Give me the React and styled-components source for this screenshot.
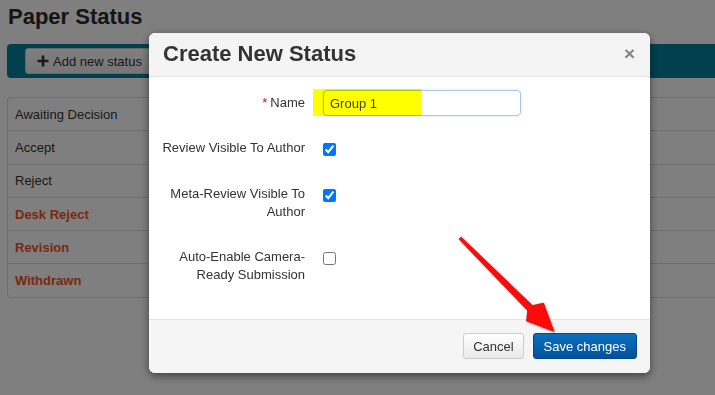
import React from 'react';
import styled, { createGlobalStyle } from 'styled-components';

const GlobalStyle = createGlobalStyle`
  html, body {
    margin: 0;
    padding: 0;
    background: #fff;
    overflow: hidden;
    font-family: "Liberation Sans", Arial, sans-serif;
    font-size: 13px;
    color: #333;
  }
`;

const Page = styled.div`
  width: 740px;
  padding: 5px 0 0 7px;
  box-sizing: border-box;
`;

const PageTitle = styled.h1`
  margin: 0 0 15px 1px;
  font-size: 22px;
  line-height: 24px;
  font-weight: bold;
  color: #2a2a2a;
`;

const ToolBar = styled.div`
  display: flex;
  align-items: center;
  height: 34px;
  padding-left: 18px;
  background: #04809f;
  border-radius: 4px 0 0 4px;
`;

const ToolButton = styled.button`
  display: flex;
  align-items: center;
  gap: 4px;
  height: 26px;
  padding: 0 12px 0 11px;
  font-family: inherit;
  font-size: 13px;
  color: #333;
  background: linear-gradient(#ffffff, #ededed);
  border: 1px solid #cfcfcf;
  border-radius: 3px;
`;

const StatusList = styled.div`
  margin-top: 19px;
  border: 1px solid #dcdcdc;
  border-right: 0;
  border-radius: 4px 0 0 4px;
`;

const StatusRow = styled.div`
  height: 32.3px;
  display: flex;
  align-items: center;
  padding-left: 7px;
  font-size: 13px;
  font-weight: ${p => (p.$custom ? 'bold' : 'normal')};
  color: ${p => (p.$custom ? '#f25024' : '#333')};
  border-top: ${p => (p.$first ? '0' : '1px solid #dcdcdc')};
`;

const Backdrop = styled.div`
  position: fixed;
  inset: 0;
  background: rgba(0, 0, 0, 0.5);
`;

const Modal = styled.div`
  position: fixed;
  left: 149px;
  top: 33px;
  width: 501px;
  background: #fff;
  border-radius: 6px;
  box-shadow: 0 3px 9px rgba(0, 0, 0, 0.5);
  overflow: hidden;
`;

const ModalHeader = styled.div`
  display: flex;
  align-items: center;
  justify-content: space-between;
  padding: 9px 14px 10px 14px;
  background: #f4f4f4;
  border-bottom: 1px solid #e6e6e6;
`;

const ModalTitle = styled.h3`
  margin: 0;
  font-size: 22px;
  line-height: 24px;
  font-weight: bold;
  color: #333;
`;

const CloseButton = styled.span`
  font-size: 19px;
  line-height: 20px;
  font-weight: bold;
  color: #858585;
  margin-right: 1px;
`;

const ModalBody = styled.div`
  padding: 13px 10px 35px 10px;
`;

const FormRow = styled.div`
  display: grid;
  grid-template-columns: 146px 198px;
  column-gap: 18px;
  align-items: ${p => (p.$center ? 'center' : 'start')};
  margin-top: ${p => p.$gap || 0}px;
`;

const FieldLabel = styled.label`
  text-align: right;
  font-size: 13px;
  line-height: 18px;
  color: #333;
`;

const Required = styled.span`
  color: #c8102e;
  margin-right: 3px;
`;

const TextInput = styled.input`
  width: 198px;
  height: 26px;
  box-sizing: border-box;
  padding: 0 6px;
  font-family: inherit;
  font-size: 13px;
  color: #444;
  border: 1px solid #a9c9e8;
  border-radius: 4px;
  box-shadow: 0 0 3px rgba(102, 175, 233, 0.35);
  outline: none;
`;

const Check = styled.input`
  width: 13px;
  height: 13px;
  margin: 4px 0 0 0;
`;

const ModalFooter = styled.div`
  display: flex;
  justify-content: flex-end;
  gap: 9px;
  padding: 13px 13px 14px;
  background: #f5f5f5;
  border-top: 1px solid #e3e3e3;
`;

const FooterButton = styled.button`
  height: 26px;
  padding: 0 ${p => (p.$primary ? 10 : 9)}px;
  font-family: inherit;
  font-size: 13px;
  border-radius: 3px;
  color: ${p => (p.$primary ? '#fff' : '#333')};
  background: ${p =>
    p.$primary ? 'linear-gradient(#0a70bf, #03509a)' : 'linear-gradient(#ffffff, #e9e9e9)'};
  border: 1px solid ${p => (p.$primary ? '#03488c' : '#cdcdcd')};
`;

const Highlight = styled.div`
  position: absolute;
  left: 164px;
  top: 56px;
  width: 108px;
  height: 27px;
  background: #ffff00;
  mix-blend-mode: multiply;
  pointer-events: none;
`;

const ArrowLayer = styled.svg`
  position: fixed;
  left: 450px;
  top: 230px;
  width: 120px;
  height: 110px;
  filter: drop-shadow(1px 1px 1px rgba(0, 0, 0, 0.35));
`;

const statuses = [
  { name: 'Awaiting Decision' },
  { name: 'Accept' },
  { name: 'Reject' },
  { name: 'Desk Reject', custom: true },
  { name: 'Revision', custom: true },
  { name: 'Withdrawn', custom: true },
];

const App = () => {
  return (
    <>
      <GlobalStyle />
      <Page>
        <PageTitle>Paper Status</PageTitle>
        <ToolBar>
          <ToolButton>
            <svg width="12" height="12" viewBox="0 0 12 12">
              <path d="M6 0.5v11M0.5 6h11" stroke="#333" strokeWidth="2.6" />
            </svg>
            Add new status
          </ToolButton>
        </ToolBar>
        <StatusList>
          {statuses.map((s, i) => (
            <StatusRow key={s.name} $first={i === 0} $custom={s.custom}>
              {s.name}
            </StatusRow>
          ))}
        </StatusList>
      </Page>

      <Backdrop />

      <Modal>
        <ModalHeader>
          <ModalTitle>Create New Status</ModalTitle>
          <CloseButton>×</CloseButton>
        </ModalHeader>
        <ModalBody>
          <FormRow $center>
            <FieldLabel>
              <Required>*</Required>Name
            </FieldLabel>
            <TextInput defaultValue="Group 1" />
          </FormRow>

          <FormRow $gap={23}>
            <FieldLabel>Review Visible To Author</FieldLabel>
            <div>
              <Check type="checkbox" defaultChecked />
            </div>
          </FormRow>

          <FormRow $gap={26}>
            <FieldLabel>Meta-Review Visible To Author</FieldLabel>
            <div>
              <Check type="checkbox" defaultChecked />
            </div>
          </FormRow>

          <FormRow $gap={27}>
            <FieldLabel>Auto-Enable Camera-Ready Submission</FieldLabel>
            <div>
              <Check type="checkbox" />
            </div>
          </FormRow>
        </ModalBody>
        <ModalFooter>
          <FooterButton>Cancel</FooterButton>
          <FooterButton $primary>Save changes</FooterButton>
        </ModalFooter>
        <Highlight />
      </Modal>

      <ArrowLayer viewBox="0 0 120 110">
        <polygon
          points="11.1,6.9 82.5,75.5 93.5,73 104,101.5 76.5,91 77.5,80.5 8.9,9.1"
          fill="#ff0a0a"
          stroke="#d00000"
          strokeWidth="0.6"
          strokeLinejoin="round"
        />
      </ArrowLayer>
    </>
  );
};

export default App;
